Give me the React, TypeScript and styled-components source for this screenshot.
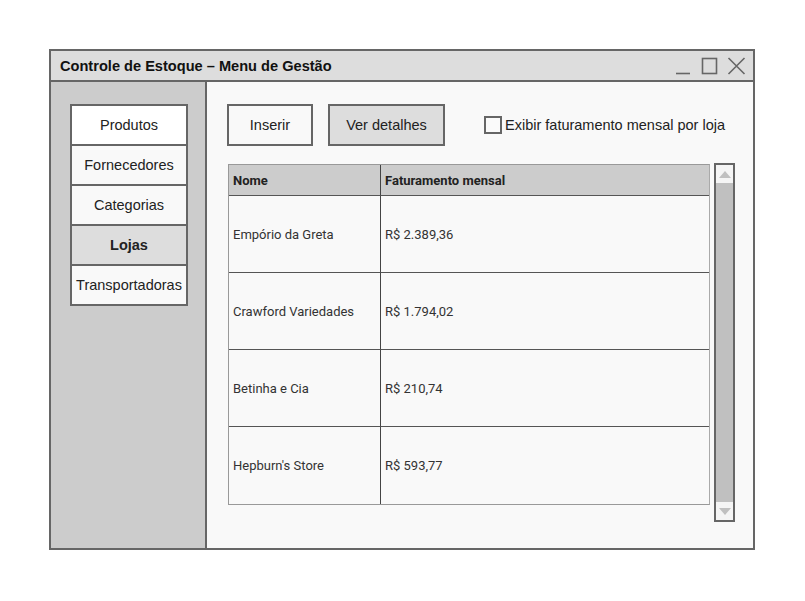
import React from "react";
import styled, { createGlobalStyle } from "styled-components";

const Global = createGlobalStyle`
  html, body { margin: 0; padding: 0; background: #ffffff; }
  body { font-family: "Liberation Sans", Arial, sans-serif; color: #333; }
`;

const Page = styled.div`
  padding: 49px 0 0 49px;
`;

const Window = styled.div`
  width: 706px;
  height: 501px;
  box-sizing: border-box;
  border: 2px solid #666;
  display: flex;
  flex-direction: column;
  background: #f9f9f9;
`;

const TitleBar = styled.div`
  height: 31px;
  box-sizing: border-box;
  border-bottom: 2px solid #666;
  background: #dddddd;
  display: flex;
  align-items: center;
  justify-content: space-between;
  padding: 1px 7px 0 9px;
`;

const Title = styled.div`
  font-weight: bold;
  font-size: 14.6px;
  color: #111;
`;

const WinControls = styled.div`
  display: flex;
  align-items: center;
  gap: 9px;
  height: 100%;
`;

const Body = styled.div`
  flex: 1;
  display: flex;
  min-height: 0;
`;

const Sidebar = styled.div`
  width: 156px;
  box-sizing: border-box;
  border-right: 2px solid #666;
  background: #cccccc;
  padding: 22px 0 0 19px;
  display: flex;
  flex-direction: column;
`;

const NavItem = styled.div<{ $active?: boolean; $first?: boolean }>`
  width: 118px;
  height: 42px;
  box-sizing: border-box;
  border: 2px solid #666;
  margin-top: ${(p) => (p.$first ? "0" : "-2px")};
  background: ${(p) => (p.$active ? "#dddddd" : p.$first ? "#ffffff" : "#f9f9f9")};
  font-weight: ${(p) => (p.$active ? "bold" : "normal")};
  font-size: 14.5px;
  color: #222;
  display: flex;
  align-items: center;
  justify-content: center;
  white-space: nowrap;
`;

const Main = styled.div`
  flex: 1;
  padding: 22px 18px 0 20px;
  display: flex;
  flex-direction: column;
`;

const Toolbar = styled.div`
  display: flex;
  align-items: center;
  height: 42px;
`;

const Button = styled.div<{ $w: number; $gray?: boolean }>`
  width: ${(p) => p.$w}px;
  height: 42px;
  box-sizing: border-box;
  border: 2px solid #666;
  background: ${(p) => (p.$gray ? "#dddddd" : "#f9f9f9")};
  display: flex;
  align-items: center;
  justify-content: center;
  font-size: 14.5px;
  color: #222;
  margin-right: 15px;
`;

const CheckLabel = styled.label`
  display: flex;
  align-items: center;
  margin-left: 24px;
  font-size: 14.5px;
  color: #222;
  white-space: nowrap;
`;

const CheckBox = styled.span`
  width: 18px;
  height: 18px;
  box-sizing: border-box;
  border: 2px solid #666;
  background: #fafafa;
  margin-right: 3px;
`;

const TableArea = styled.div`
  display: flex;
  margin-top: 17px;
  margin-left: 1px;
  align-items: flex-start;
`;

const Table = styled.div`
  width: 482px;
  margin-top: 1px;
  display: grid;
  grid-template-columns: 152px 1fr;
  grid-template-rows: 31px repeat(4, 77px);
  border: 1px solid #999;
  border-right-color: #aaa;
  box-sizing: border-box;
  font-family: Roboto, "Liberation Sans", sans-serif;
`;

const Cell = styled.div<{ $head?: boolean; $col: number; $last?: boolean }>`
  display: flex;
  align-items: center;
  padding-left: 4px;
  font-size: 13px;
  font-weight: ${(p) => (p.$head ? "bold" : "normal")};
  background: ${(p) => (p.$head ? "#cccccc" : "#f9f9f9")};
  color: ${(p) => (p.$head ? "#222" : "#333")};
  border-bottom: ${(p) => (p.$last ? "none" : "1px solid #555")};
  border-right: ${(p) => (p.$col === 0 ? "1px solid #444" : "none")};
  white-space: nowrap;
`;

const Scrollbar = styled.div`
  width: 21px;
  height: 359px;
  margin-left: 4px;
  box-sizing: border-box;
  border: 2px solid #666;
  background: #c0c0c0;
  display: flex;
  flex-direction: column;
  justify-content: space-between;
`;

const ScrollArrow = styled.div`
  height: 18px;
  background: #f5f5f5;
  display: flex;
  align-items: center;
  justify-content: center;
`;

const rows = [
  ["Empório da Greta", "R$ 2.389,36"],
  ["Crawford Variedades", "R$ 1.794,02"],
  ["Betinha e Cia", "R$ 210,74"],
  ["Hepburn's Store", "R$ 593,77"],
];

const nav = ["Produtos", "Fornecedores", "Categorias", "Lojas", "Transportadoras"];

export default function App() {
  return (
    <>
      <Global />
      <Page>
        <Window>
          <TitleBar>
            <Title>Controle de Estoque – Menu de Gestão</Title>
            <WinControls>
              <svg width="17" height="18" viewBox="0 0 17 18">
                <line x1="1" y1="16.5" x2="15" y2="16.5" stroke="#666" strokeWidth="1.6" />
              </svg>
              <svg width="17" height="18" viewBox="0 0 17 18">
                <rect x="1.5" y="1.5" width="14" height="15" fill="none" stroke="#666" strokeWidth="1.6" />
              </svg>
              <svg width="19" height="18" viewBox="0 0 19 18">
                <path d="M1.5 1 L17.5 17 M17.5 1 L1.5 17" stroke="#666" strokeWidth="1.6" fill="none" />
              </svg>
            </WinControls>
          </TitleBar>
          <Body>
            <Sidebar>
              {nav.map((n, i) => (
                <NavItem key={n} $first={i === 0} $active={n === "Lojas"}>
                  {n}
                </NavItem>
              ))}
            </Sidebar>
            <Main>
              <Toolbar>
                <Button $w={86}>Inserir</Button>
                <Button $w={117} $gray>Ver detalhes</Button>
                <CheckLabel>
                  <CheckBox />
                  Exibir faturamento mensal por loja
                </CheckLabel>
              </Toolbar>
              <TableArea>
                <Table>
                  <Cell $head $col={0}>Nome</Cell>
                  <Cell $head $col={1}>Faturamento mensal</Cell>
                  {rows.map((r, i) => (
                    <React.Fragment key={r[0]}>
                      <Cell $col={0} $last={i === rows.length - 1}>{r[0]}</Cell>
                      <Cell $col={1} $last={i === rows.length - 1}>{r[1]}</Cell>
                    </React.Fragment>
                  ))}
                </Table>
                <Scrollbar>
                  <ScrollArrow>
                    <svg width="12" height="7" viewBox="0 0 12 7">
                      <path d="M0 7 L6 0 L12 7 Z" fill="#c0c0c0" />
                    </svg>
                  </ScrollArrow>
                  <ScrollArrow>
                    <svg width="12" height="7" viewBox="0 0 12 7">
                      <path d="M0 0 L6 7 L12 0 Z" fill="#c0c0c0" />
                    </svg>
                  </ScrollArrow>
                </Scrollbar>
              </TableArea>
            </Main>
          </Body>
        </Window>
      </Page>
    </>
  );
}
